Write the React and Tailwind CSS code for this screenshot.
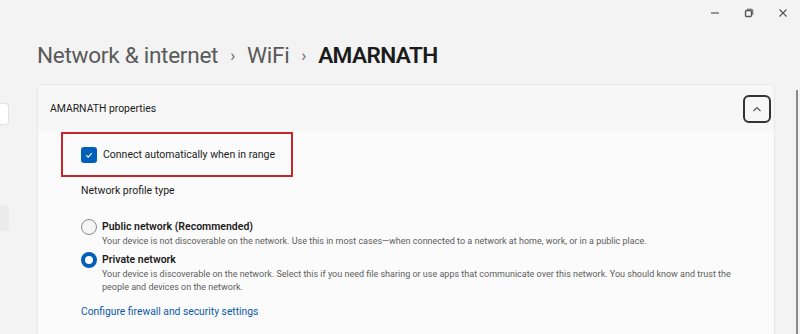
import React from 'react'

const font = { fontFamily: 'Roboto, "Noto Sans", sans-serif' }

function WindowControls() {
  return (
    <div className="absolute top-0 right-0 flex items-center h-[26px] text-[#555]">
      <div className="w-[34px] flex justify-center">
        <svg width="10" height="10" viewBox="0 0 10 10"><path d="M1 5h8" stroke="currentColor" strokeWidth="1.2" /></svg>
      </div>
      <div className="w-[34px] flex justify-center">
        <svg width="10" height="10" viewBox="0 0 10 10">
          <rect x="1.5" y="2.5" width="6" height="6" rx="1.2" fill="none" stroke="currentColor" strokeWidth="1.4" />
          <path d="M3 1.2h4.2a1.6 1.6 0 0 1 1.6 1.6V7" fill="none" stroke="currentColor" strokeWidth="1" />
        </svg>
      </div>
      <div className="w-[34px] flex justify-center">
        <svg width="10" height="10" viewBox="0 0 10 10"><path d="M1.5 1.5l7 7M8.5 1.5l-7 7" stroke="currentColor" strokeWidth="1.1" /></svg>
      </div>
    </div>
  )
}

function Radio({ checked }) {
  return checked ? (
    <div className="w-4 h-4 rounded-full border-[4px] border-[#005fb8] bg-white flex-shrink-0" />
  ) : (
    <div className="w-4 h-4 rounded-full border border-[#8a8a8a] bg-[#f5f5f5] flex-shrink-0" />
  )
}

export default function App() {
  return (
    <div className="relative w-[800px] h-[334px] overflow-hidden bg-[#f3f3f3]" style={font}>
      <WindowControls />

      {/* sidebar remnants */}
      <div className="absolute left-0 top-[103px] w-[9px] h-[22px] bg-white border border-l-0 border-[#e2e2e2] rounded-r" />
      <div className="absolute left-0 top-[205px] w-[9px] h-[26px] bg-[#eaeaea] rounded-r" />

      {/* scrollbar */}
      <div className="absolute left-[796px] top-[90px] w-[2px] h-[244px] bg-[#8a8a8a]" />

      <div className="pl-[37px] pt-[40px]">
        <div className="flex items-center h-[32px] text-[22.6px] tracking-[-0.3px]">
          <span className="text-[#5a5a5a]">Network &amp; internet</span>
          <span className="text-[#6a6a6a] text-[17px] mx-[12px]">›</span>
          <span className="text-[#5a5a5a]">WiFi</span>
          <span className="text-[#6a6a6a] text-[17px] mx-[12px]">›</span>
          <span className="text-[#1b1b1b] font-semibold tracking-[-0.6px]">AMARNATH</span>
        </div>

        <div className="mt-[12px] w-[738px] rounded-t-[5px] border border-[#e8e8e8] overflow-hidden">
          <div className="h-[49px] bg-[#f7f7f7] border-b border-[#dedede] flex items-center justify-between pl-[12px] pr-[3px]">
            <span className="text-[10.4px] text-[#1b1b1b]">AMARNATH properties</span>
            <div className="w-[28px] h-[28px] rounded-[6px] border-2 border-[#333] flex items-center justify-center">
              <svg width="10" height="6" viewBox="0 0 10 6"><path d="M1.5 5L5 1.5 8.5 5" fill="none" stroke="#555" strokeWidth="1.1" /></svg>
            </div>
          </div>

          <div className="bg-[#fbfbfb] h-[220px] pl-[43px]">
            <div className="relative -mt-[2px] -ml-[20px] w-[232px] h-[45px] border-2 border-[#c7262b] flex items-center pl-[18px]">
              <div className="w-4 h-4 rounded-[3px] bg-[#005fb8] flex items-center justify-center flex-shrink-0">
                <svg width="10" height="10" viewBox="0 0 10 10"><path d="M2.2 5.2l1.9 1.9 3.8-4" fill="none" stroke="white" strokeWidth="1.1" /></svg>
              </div>
              <span className="ml-[6px] text-[10.5px] text-[#1b1b1b] whitespace-nowrap">Connect automatically when in range</span>
            </div>

            <div className="mt-[6px] text-[10.5px] leading-[16px] text-[#1b1b1b]">Network profile type</div>

            <div className="mt-[20px] flex gap-[5px]">
              <Radio />
              <div>
                <div className="text-[10.5px] font-semibold text-[#1b1b1b] leading-[16px]">Public network (Recommended)</div>
                <div className="text-[9px] text-[#5d5d5d] leading-[13px]">Your device is not discoverable on the network. Use this in most cases—when connected to a network at home, work, or in a public place.</div>
              </div>
            </div>

            <div className="mt-[4px] flex gap-[5px]">
              <Radio checked />
              <div className="w-[636px]">
                <div className="text-[10.5px] font-semibold text-[#1b1b1b] leading-[16px]">Private network</div>
                <div className="text-[9px] text-[#5d5d5d] leading-[13px]">Your device is discoverable on the network. Select this if you need file sharing or use apps that communicate over this network. You should know and trust the people and devices on the network.</div>
              </div>
            </div>

            <div className="mt-[10px] text-[10.3px] leading-[16px] text-[#0a5aa8]">Configure firewall and security settings</div>
          </div>
        </div>
      </div>
    </div>
  )
}
